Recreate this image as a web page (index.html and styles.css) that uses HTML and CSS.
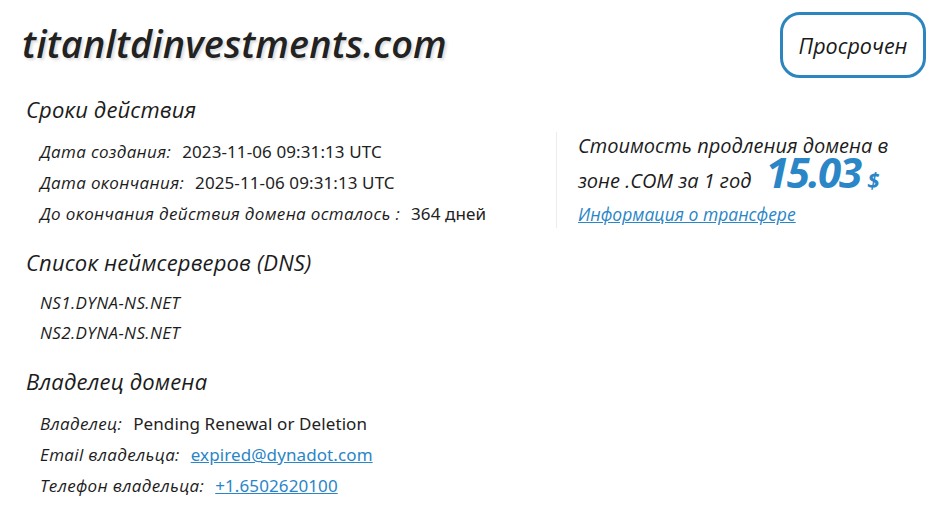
FILE: index.html
```html
<!DOCTYPE html>
<html lang="ru">
<head>
<meta charset="utf-8">
<link rel="stylesheet" href="styles.css">
</head>
<body>
<div class="page">
  <header class="top">
    <h1 class="domain">titanltdinvestments.com</h1>
    <div class="badge">Просрочен</div>
  </header>
  <div class="main">
    <div class="left">
      <h2 class="sec">Сроки действия</h2>
      <div class="rows">
        <div class="row"><span class="lbl">Дата создания:</span><span class="val">2023-11-06 09:31:13 UTC</span></div>
        <div class="row"><span class="lbl">Дата окончания:</span><span class="val">2025-11-06 09:31:13 UTC</span></div>
        <div class="row"><span class="lbl">До окончания действия домена осталось :</span><span class="val">364 дней</span></div>
      </div>
      <h2 class="sec">Список неймсерверов (DNS)</h2>
      <div class="rows ns">
        <div class="row"><span class="lbl">NS1.DYNA-NS.NET</span></div>
        <div class="row"><span class="lbl">NS2.DYNA-NS.NET</span></div>
      </div>
      <h2 class="sec">Владелец домена</h2>
      <div class="rows">
        <div class="row"><span class="lbl">Владелец:</span><span class="val">Pending Renewal or Deletion</span></div>
        <div class="row"><span class="lbl">Email владельца:</span><a class="val link" href="#">expired@dynadot.com</a></div>
        <div class="row"><span class="lbl">Телефон владельца:</span><a class="val link" href="#">+1.6502620100</a></div>
      </div>
    </div>
    <aside class="price">
      <div class="ptext">Стоимость продления домена в</div>
      <div class="ptext line2">зоне .COM за 1 год <span class="amount">15.03</span><span class="cur">$</span></div>
      <a class="transfer" href="#">Информация о трансфере</a>
    </aside>
  </div>
</div>
</body>
</html>
```
FILE: styles.css
```css
html, body {
  margin: 0;
  padding: 0;
  background: #fff;
}
body {
  font-family: "Open Sans", "Noto Sans", sans-serif;
  color: #1c1c1c;
}
.page {
  width: 946px;
  height: 520px;
  box-sizing: border-box;
  padding: 12px 20px 0 22px;
}
.top {
  display: flex;
  justify-content: space-between;
  align-items: flex-start;
}
.domain {
  margin: 10px 0 0 0;
  font-size: 37.8px;
  line-height: 44px;
  font-style: italic;
  font-weight: 600;
  color: #222;
  letter-spacing: 0.15px;
  text-shadow: 2px 2px 3px rgba(0,0,0,0.15);
}
.badge {
  box-sizing: border-box;
  width: 146px;
  height: 66px;
  border: 3px solid #2c85bf;
  border-radius: 20px;
  display: flex;
  align-items: center;
  justify-content: center;
  font-family: "Open Sans", sans-serif;
  font-style: italic;
  font-size: 21.5px;
  color: #1a1a1a;
}
.main {
  display: flex;
  margin-top: 16px;
}
.left {
  width: 534px;
}
.sec {
  margin: 0;
  font-size: 22px;
  line-height: 30px;
  font-weight: 400;
  font-style: italic;
  color: #1c1c1c;
  padding-left: 4px;
  letter-spacing: 0.15px;
}
.rows {
  padding: 12px 0 18px 18px;
}
.ns { padding-top: 11px; padding-bottom: 18px; }
.row {
  display: flex;
  align-items: baseline;
  font-size: 17px;
  line-height: 31px;
}
.ns .row { line-height: 30px; }
.lbl {
  font-style: italic;
  color: #1c1c1c;
  letter-spacing: 0.35px;
}
.val {
  margin-left: 11px;
  font-family: "Noto Sans", sans-serif;
  color: #222;
  letter-spacing: 0.1px;
}
.link {
  color: #2a86c6;
  text-decoration: underline;
}
.price {
  margin-top: 38px;
  height: 96px;
  border-left: 1px solid #ececec;
  padding-left: 21px;
  display: flex;
  flex-direction: column;
}
.ptext {
  font-size: 20px;
  font-style: italic;
  line-height: 28px;
  color: #1c1c1c;
}
.line2 {
  height: 42px;
  line-height: 42px;
  white-space: nowrap;
}
.amount {
  font-size: 42px;
  line-height: 20px;
  font-weight: 700;
  color: #2a86c6;
  margin-left: 9px;
  letter-spacing: -2px;
}
.cur {
  font-size: 22px;
  line-height: 20px;
  font-weight: 700;
  color: #2a86c6;
  margin-left: 7px;
}
.transfer {
  font-size: 17.5px;
  font-style: italic;
  color: #2a86c6;
  text-decoration: underline;
  line-height: 24px;
}
```
